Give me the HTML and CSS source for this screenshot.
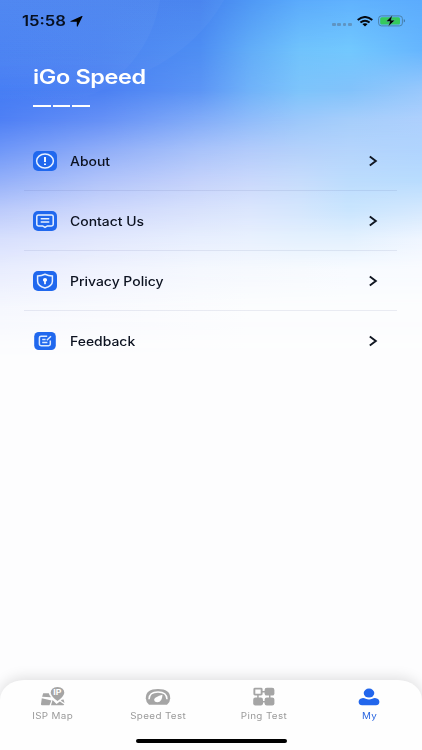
FILE: index.html
```html
<!DOCTYPE html>
<html lang="en">
<head>
<meta charset="utf-8">
<title>iGo Speed</title>
<link rel="stylesheet" href="styles.css">
</head>
<body>
<div class="screen">
  <div class="sky" aria-hidden="true">
    <i class="s0"></i><i class="s1"></i><i class="s2"></i><i class="s3"></i><i class="s4"></i><i class="s5"></i><i class="s6"></i><i class="s7"></i><i class="s8"></i><i class="s9"></i><i class="s10"></i>
    <svg class="arcs" width="422" height="120" viewBox="0 0 422 120">
      <defs><linearGradient id="fade" x1="0" y1="0" x2="0" y2="1"><stop offset="0" stop-color="#fff" stop-opacity=".03"/><stop offset=".6" stop-color="#fff" stop-opacity=".03"/><stop offset="1" stop-color="#fff" stop-opacity="0"/></linearGradient></defs>
      <path d="M0 0H160Q148 70 75 104H0Z" fill="url(#fade)"/>
      <path d="M0 0H224Q198 46 145 72Q110 90 60 104H0Z" fill="url(#fade)"/>
    </svg>
  </div>

  <header class="status">
    <span class="time">15:58</span>
    <svg class="locate" width="13" height="11" viewBox="0 0 13 11"><path d="M12.6.3 7.6 10.6Q7 11 6.8 10.3V5.8H1Q-.2 5.5.8 4.9L11.8.1Q12.6-.1 12.6.3Z"/></svg>
    <span class="dots"><b></b><b></b><b></b><b></b></span>
    <svg class="wifi" width="16" height="11" viewBox="0 0 16 11"><g fill="none" stroke="#050a12" stroke-width="2"><path d="M.7 4Q8-2 15.3 4"/><path d="M3.4 6.5Q8 2.9 12.600 6.500"/></g><path d="M5.4 8.1Q8 6.300 10.600 8.100L8 10.500Z"/></svg>
    <svg class="battery" width="28" height="12" viewBox="0 0 28 12"><rect x=".6" y=".9" width="23.8" height="10" rx="2.8" fill="none" stroke="#4a82ac" stroke-width="1"/><rect x="2.2" y="2.3" width="19.8" height="7.2" rx="1.5" fill="#35c95c"/><path d="M25.8 4v3.4q1.2-.5 1.2-1.7T25.8 4Z" fill="#3e719c"/><path d="M14.400.3 8 6.500h3.900L10.200 11.500 17 5.200h-3.900Z" stroke="#6fc4c4" stroke-width=".4"/></svg>
  </header>

  <section class="brand">
    <h1>iGo Speed</h1>
    <div class="dashes"><b></b><b></b><b></b></div>
  </section>

  <main class="menu">
    <a class="row">
      <svg class="icon" width="26" height="22" viewBox="0 0 26 22"><rect x="1" y="1" width="24" height="20" rx="5" fill="#2068ee"/><ellipse cx="13" cy="11" rx="8.4" ry="6.9" fill="none" stroke="#e8f1ff" stroke-width="1.5"/><path d="M13 7v5M13 13.4v1.7" stroke="#fff" stroke-width="1.9"/></svg>
      <span class="label">About</span>
      <svg class="chevron" width="10" height="12" viewBox="0 0 10 12"><path d="M1.8 1.6 7.8 6 1.8 10.4"/></svg>
    </a>
    <a class="row">
      <svg class="icon" width="26" height="22" viewBox="0 0 26 22"><rect x="1" y="1" width="24" height="20" rx="5" fill="#2068ee"/><path d="M6.500 5h13q1.700 0 1.700 1.500v8q0 1.400-1.700 1.400H15.400L13 17.400 10.600 15.900H6.500q-1.700 0-1.700-1.400v-8Q4.800 5 6.500 5Z" fill="none" stroke="#e8f1ff" stroke-width="1.5"/><path d="M8.700 8.800h8.600M8.700 12h8.600" stroke="#e8f1ff" stroke-width="1.4"/></svg>
      <span class="label">Contact Us</span>
      <svg class="chevron" width="10" height="12" viewBox="0 0 10 12"><path d="M1.8 1.6 7.8 6 1.8 10.4"/></svg>
    </a>
    <a class="row">
      <svg class="icon" width="26" height="22" viewBox="0 0 26 22"><rect x="1" y="1" width="24" height="20" rx="5" fill="#2068ee"/><path d="M13 4.2Q16.5 5.7 20.4 6v5.2Q20.4 15.8 13 18 5.6 15.8 5.6 11.2V6Q9.5 5.7 13 4.2Z" fill="none" stroke="#e8f1ff" stroke-width="1.5"/><ellipse cx="13" cy="9.900" rx="2.100" ry="1.800" fill="#fff"/><path d="M13 10v4.300" stroke="#fff" stroke-width="1.7"/></svg>
      <span class="label">Privacy Policy</span>
      <svg class="chevron" width="10" height="12" viewBox="0 0 10 12"><path d="M1.8 1.6 7.8 6 1.8 10.4"/></svg>
    </a>
    <a class="row">
      <svg class="icon" width="26" height="22" viewBox="0 0 26 22"><rect x="2.200" y="2" width="21.600" height="18" rx="4.500" fill="#2068ee"/><path d="M15.200 6.300H9.100Q7.400 6.300 7.400 7.700v6.600q0 1.400 1.700 1.400h7.500q1.700 0 1.700-1.400v-3.700M10.200 9.500h3.400M10.200 12.400h5.200M14.800 10.200 19 6.200" fill="none" stroke="#dceaff" stroke-width="1.500"/></svg>
      <span class="label">Feedback</span>
      <svg class="chevron" width="10" height="12" viewBox="0 0 10 12"><path d="M1.8 1.6 7.8 6 1.8 10.4"/></svg>
    </a>
  </main>

  <footer class="dock">
    <nav class="tabs">
      <a class="tab">
        <svg width="26" height="20" viewBox="0 0 26 20"><g fill="#a5a5a5"><path d="M3.200 6.200h5.600Q9.300 8.600 11 10.200L2.100 9.800ZM1.800 11.200l9.600 2.300-1.900 4.800H2Q.8 18.300 1 17ZM12.600 13.100l3.900 4 3.400-2.600 4.300 3q-.2.800-1 .8H11ZM21.700 12.700l1.900-.3.900 3.500-3.600-2.200Z"/><path d="M17.500 0Q24.300.5 24.300 5.700 23.800 9.600 17.500 14 11.200 9.600 10.700 5.700 10.700.5 17.500 0Z"/></g><text class="pin-text" transform="translate(13.200 8.300) scale(1.250 1)">IP</text></svg>
        <span>ISP Map</span>
      </a>
      <a class="tab">
        <svg width="26" height="20" viewBox="0 0 26 20"><path d="M4 17.800Q.8 14.800.8 11.200.8 2.100 13 2.100t12.200 9.100q0 3.600-3.200 6.600Z" fill="#a5a5a5"/><path d="M4 12.300Q4.200 5.100 13 5.100t9 7.200" fill="none" stroke="#fff" stroke-width="1.500"/><path d="M17.500 7.800Q17 15.300 12.600 15.300 8.900 15 9.200 12.200 10 9.900 17.500 7.800Z" fill="#fff"/></svg>
        <span>Speed Test</span>
      </a>
      <a class="tab">
        <svg width="26" height="20" viewBox="0 0 26 20"><g fill="#a5a5a5"><path fill-rule="evenodd" d="M4 .8h6q1.600 0 1.600 1.400v4.800Q11.600 8.400 10 8.400H4Q2.400 8.400 2.400 7V2.200Q2.400.8 4 .8ZM4.300 2.500v4.200h5.400V2.500Z"/><rect x="13.600" y=".8" width="9.800" height="7.800" rx="2.200"/><rect x="2.200" y="10.600" width="9.800" height="7.800" rx="2.200"/><rect x="13.600" y="10.600" width="9.800" height="7.800" rx="2.200"/><path d="M11 3.900h4v1.500h-4ZM6.200 8h1.500v4H6.200ZM18 8h1.500v4H18ZM11 14h4v1.500h-4Z"/></g></svg>
        <span>Ping Test</span>
      </a>
      <a class="tab active">
        <svg width="26" height="20" viewBox="0 0 26 20"><g fill="#2266ec"><ellipse cx="13" cy="6.100" rx="5.300" ry="4.500"/><path d="M6 11.200Q8 10.800 9.700 11.800 13 13.400 16.300 11.800 18 10.800 20 11.200 23.400 11.800 23.400 15.100 23 18.300 20 18.300H6Q3 18.300 2.600 15.100 2.600 11.800 6 11.200Z"/></g></svg>
        <span>My</span>
      </a>
    </nav>
    <div class="home"></div>
  </footer>
</div>
</body>
</html>
```
FILE: styles.css
```css
* { box-sizing: border-box; }
body { margin: 0; font-family: Inter, "Liberation Sans", sans-serif; }
.screen {
  width: 422px; height: 750px; overflow: hidden; isolation: isolate;
  display: grid; grid-template-rows: 43px 83px 1fr 100px; grid-template-columns: 422px;
  background: #fdfdfe;
}

/* Backdrop: horizontal colour bands, each fading in over the one above it */
.sky { grid-area: 1 / 1 / 5 / 2; display: grid; z-index: -1; }
.sky > * { grid-area: 1 / 1; }
.arcs { z-index: 1; }
.sky i {
  background: linear-gradient(to right, var(--a) 0, var(--b) 100px, var(--c) 200px, var(--d) 250px, var(--e) 300px, var(--f) 350px, var(--g) 422px);
  mask-image: linear-gradient(to bottom, transparent var(--from), #000 var(--to));
}
.s0 { --from: -2px; --to: -1px; --a: #4681f1; --b: #4680f0; --c: #4582ef; --d: #4f98f5; --e: #5babfc; --f: #60b2fe; --g: #5cacfd; }
.s1 { --from: 0px; --to: 50px; --a: #427cf2; --b: #4680f1; --c: #4e8ef3; --d: #62adf8; --e: #70c3fc; --f: #72c8fe; --g: #66b6fe; }
.s2 { --from: 50px; --to: 90px; --a: #447cf4; --b: #4b80f3; --c: #5c95f5; --d: #70b2f9; --e: #7dc4fb; --f: #82c2fb; --g: #98c8fc; }
.s3 { --from: 90px; --to: 120px; --a: #4f80f5; --b: #6590f6; --c: #82acf8; --d: #90bcfa; --e: #9cc8fb; --f: #a6cefb; --g: #aed0fd; }
.s4 { --from: 120px; --to: 150px; --a: #6f97f8; --b: #8fadf8; --c: #a9c3fa; --d: #b2cbfb; --e: #b4d1fb; --f: #b4d4fc; --g: #b0d4fe; }
.s5 { --from: 150px; --to: 180px; --a: #94b0f9; --b: #b0c3fa; --c: #c4d2fb; --d: #c9d8fc; --e: #c6dcfc; --f: #bcdcfd; --g: #b8dcfe; }
.s6 { --from: 180px; --to: 210px; --a: #bccbfb; --b: #ced8fc; --c: #d8e2fc; --d: #dbe6fd; --e: #d4e6fd; --f: #c9e5fe; --g: #d4e8fe; }
.s7 { --from: 210px; --to: 240px; --a: #d8e0fd; --b: #e2e8fd; --c: #e8effe; --d: #e9f1fe; --e: #e5f1fe; --f: #e4f1fe; --g: #f0f6ff; }
.s8 { --from: 240px; --to: 270px; --a: #e9edfe; --b: #f0f3fe; --c: #f5f8fe; --d: #f6f9fe; --e: #f7fafe; --f: #f8fbff; --g: #f9fbff; }
.s9 { --from: 270px; --to: 310px; --a: #f6f8fe; --b: #f9fafe; --c: #fbfcfe; --d: #fcfdfe; --e: #fcfdfe; --f: #fcfdfe; --g: #fcfdfe; }
.s10 { --from: 310px; --to: 360px; --a: #fdfdfe; --b: #fdfdfe; --c: #fdfdfe; --d: #fdfdfe; --e: #fdfdfe; --f: #fdfdfe; --g: #fdfdfe; }

.status { grid-area: 1 / 1; display: flex; align-items: center; height: 42px; padding-left: 22px; }
.time { width: 48px; font-size: 14px; font-weight: 600; line-height: 20px; color: #071020; transform: scaleX(1.19); transform-origin: left; white-space: nowrap; }
.dots { display: flex; gap: 1.6px; margin: 6px 5px 0 249px; }
.dots b { width: 3.7px; height: 3px; border-radius: 1px; background: #5f94c2; }
.battery { margin-left: 5px; }

.brand { grid-area: 2 / 1; padding: 20px 0 0 33px; }
h1 { margin: 0; width: 110px; font-size: 20px; line-height: 28px; letter-spacing: -.3px; font-weight: 600; color: #fff; white-space: nowrap; transform: scaleX(1.17); transform-origin: left; }
.dashes { display: flex; gap: 2px; margin-top: 13.5px; }
.dashes b { width: 17.6px; height: 2px; background: #fff; }

.menu { grid-area: 3 / 1; margin: 5px 25px 0 24px; }
.row { display: flex; align-items: center; height: 60.1px; padding: 0 19px 0 8px; border-bottom: 1px solid rgba(40, 60, 120, .09); color: #0c1220; }
.row:last-child { border-bottom: 0; }
.label { flex: 1; margin: 2px 0 0 12px; font-size: 12.5px; font-weight: 500; line-height: 20px; transform: scaleX(1.115); transform-origin: left; white-space: nowrap; }
.chevron path { fill: none; stroke: #111722; stroke-width: 1.9; }

.dock { grid-area: 4 / 1; align-self: end; height: 70px; background: #fefefe; border-radius: 24px 24px 0 0 / 20px 20px 0 0; box-shadow: 0 -2px 14px rgba(0, 0, 0, .13); }
.tabs { display: grid; grid-template-columns: repeat(4, 1fr); padding-top: 7px; }
.tab { display: flex; flex-direction: column; align-items: center; color: #9b9b9b; }
.tab span { font-size: 8.5px; line-height: 12px; margin-top: 3px; letter-spacing: .3px; transform: scaleX(1.16); white-space: nowrap; }
.active { color: #2a66e0; }
.pin-text { font: 700 7px Inter, sans-serif; fill: #fff; }
.home { width: 151px; height: 4px; margin: 17px auto 0; border-radius: 2px; background: #000; }
```
